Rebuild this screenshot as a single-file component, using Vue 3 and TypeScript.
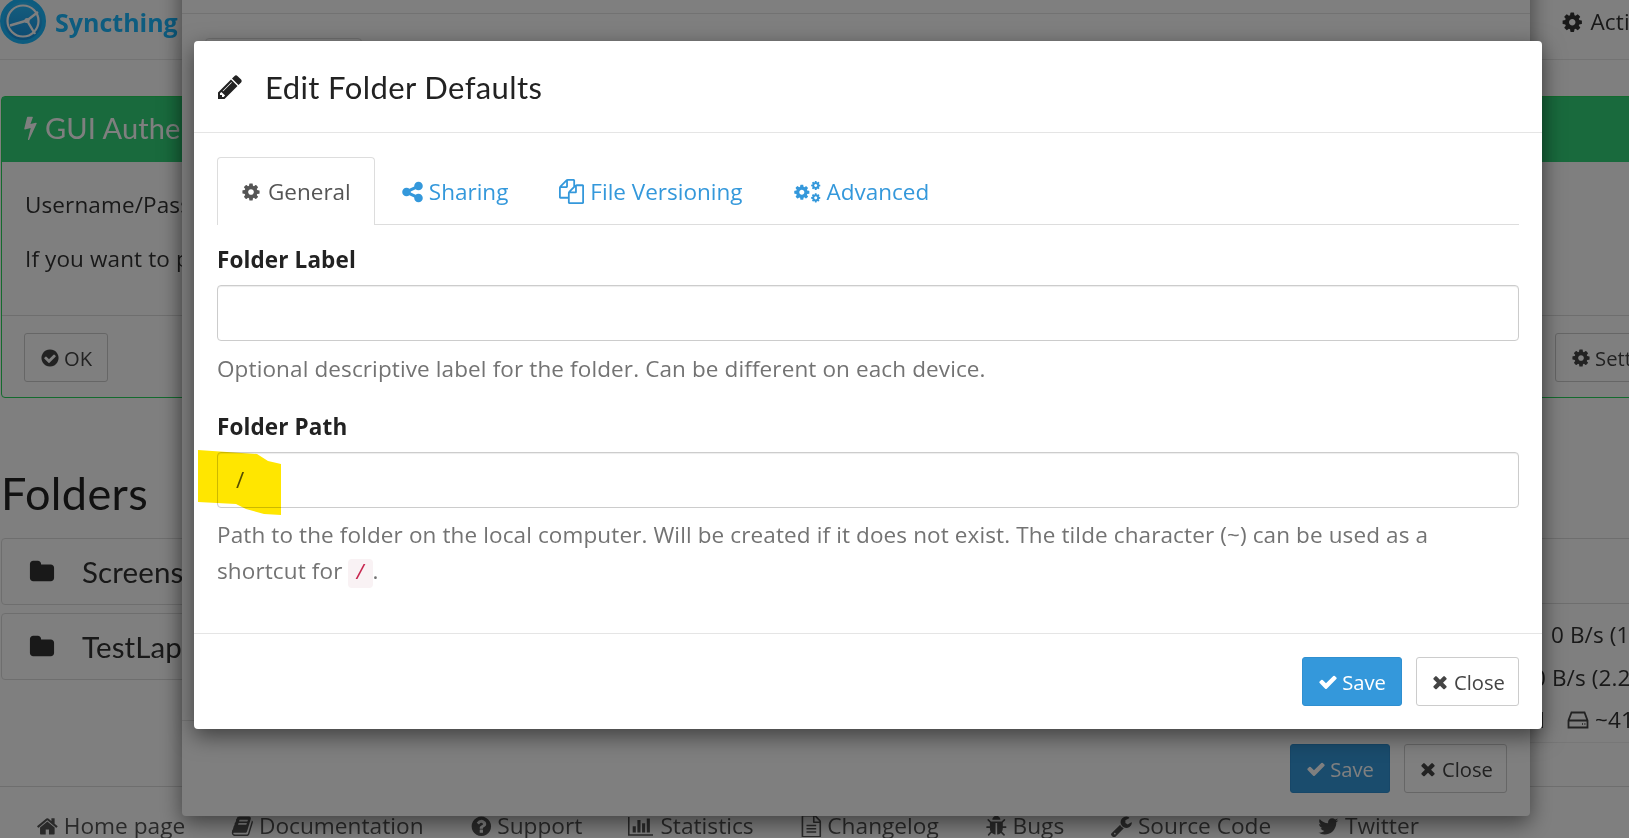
<script setup lang="ts">
const p = {
  cog: 'M1152 896q0-106-75-181t-181-75-181 75-75 181 75 181 181 75 181-75 75-181zm512-109v222q0 12-8 23t-20 13l-185 28q-19 54-39 91 35 50 107 138 10 12 10 25t-9 23q-27 37-99 108t-94 71q-12 0-26-9l-138-108q-44 23-91 38-16 136-29 186-7 28-36 28h-222q-14 0-24.5-8.5t-11.5-21.5l-28-184q-49-16-90-37l-141 107q-10 9-25 9-14 0-25-11-126-114-165-168-7-10-7-23 0-12 8-23 15-21 51-66.5t54-70.5q-27-50-41-99l-183-27q-13-2-21-12.5t-8-23.5v-222q0-12 8-23t19-13l186-28q14-46 39-92-40-57-107-138-10-12-10-24 0-10 9-23 26-36 98.5-107.5t94.5-71.5q13 0 26 10l138 107q44-23 91-38 16-136 29-186 7-28 36-28h222q14 0 24.5 8.5t11.5 21.5l28 184q49 16 90 37l142-107q9-9 24-9 13 0 25 10 129 119 165 170 7 8 7 22 0 12-8 23-15 21-51 66.5t-54 70.5q26 50 41 98l183 28q13 2 21 12.5t8 23.5z',
  check: 'M1671 566q0 40-28 68l-724 724-136 136q-28 28-68 28t-68-28l-136-136-362-362q-28-28-28-68t28-68l136-136q28-28 68-28t68 28l294 295 656-657q28-28 68-28t68 28l136 136q28 28 28 68z',
  times: 'M1490 1322q0 40-28 68l-136 136q-28 28-68 28t-68-28l-294-294-294 294q-28 28-68 28t-68-28l-136-136q-28-28-28-68t28-68l294-294-294-294q-28-28-28-68t28-68l136-136q28-28 68-28t68 28l294 294 294-294q28-28 68-28t68 28l136 136q28 28 28 68t-28 68l-294 294 294 294q28 28 28 68z',
  pencil: 'M491 1536l91-91-235-235-91 91v107h128v128h107zm523-928q0-22-22-22-10 0-17 7l-542 542q-7 7-7 17 0 22 22 22 10 0 17-7l542-542q7-7 7-17zm-54-192l416 416-832 832h-416v-416zm683 96q0 53-37 90l-166 166-416-416 166-165q36-38 90-38 53 0 91 38l235 234q37 39 37 91z',
  share: 'M1344 1024q133 0 226.5 93.5t93.5 226.5-93.5 226.5-226.5 93.5-226.5-93.5-93.5-226.5q0-12 2-34l-360-180q-92 86-218 86-133 0-226.5-93.5t-93.5-226.5 93.5-226.5 226.5-93.5q126 0 218 86l360-180q-2-22-2-34 0-133 93.5-226.5t226.5-93.5 226.5 93.5 93.5 226.5-93.5 226.5-226.5 93.5q-126 0-218-86l-360 180q2 22 2 34t-2 34l360 180q92-86 218-86z',
  copy: 'M1696 384q40 0 68 28t28 68v1216q0 40-28 68t-68 28h-960q-40 0-68-28t-28-68v-288h-544q-40 0-68-28t-28-68v-672q0-40 20-88t48-76l408-408q28-28 76-48t88-20h416q40 0 68 28t28 68v328q68-40 128-40h416zm-544 213l-299 299h299v-299zm-640-384l-299 299h299v-299zm196 647l316-316v-416h-384v416q0 40-28 68t-68 28h-416v640h512v-256q0-40 20-88t48-76zm956 804v-1152h-384v416q0 40-28 68t-68 28h-416v640h896z',
  bolt: 'M1333 566q18 20 7 44l-540 1157q-13 25-42 25-4 0-14-2-17-5-25.5-19t-4.5-30l197-808-406 101q-4 1-12 1-18 0-31-11-18-15-13-39l201-825q4-14 16-23t28-9h328q19 0 32 12.5t13 29.5q0 8-5 18l-171 463 396-98q8-2 12-2 19 0 34 15z',
  ok: 'M1412 734q0-28-18-46l-91-90q-19-19-45-19t-45 19l-408 407-226-226q-19-19-45-19t-45 19l-91 90q-18 18-18 46 0 27 18 45l362 362q19 19 45 19 27 0 46-19l543-543q18-18 18-45zm252 162q0 209-103 385.5t-279.5 279.5-385.5 103-385.5-103-279.5-279.5-103-385.5 103-385.5 279.5-279.5 385.5-103 385.5 103 279.5 279.5 103 385.5z',
  folder: 'M1728 608v704q0 92-66 158t-158 66h-1216q-92 0-158-66t-66-158v-960q0-92 66-158t158-66h320q92 0 158 66t66 158v32h672q92 0 158 66t66 158z',
  home: 'M1472 992v480q0 26-19 45t-45 19h-384v-384h-256v384h-384q-26 0-45-19t-19-45v-480q0-1 .5-3t.5-3l575-474 575 474q1 2 1 6zm223-69l-62 74q-8 9-21 11h-3q-13 0-21-7l-692-577-692 577q-12 8-24 7-13-2-21-11l-62-74q-8-10-7-23.5t11-21.5l719-599q32-26 76-26t76 26l244 204v-195q0-14 9-23t23-9h192q14 0 23 9t9 23v408l219 182q10 8 11 21.5t-7 23.5z',
  question: 'M1024 1376v-192q0-14-9-23t-23-9h-192q-14 0-23 9t-9 23v192q0 14 9 23t23 9h192q14 0 23-9t9-23zm256-672q0-88-55.5-163t-138.5-116-170-41q-243 0-371 213-15 24 8 42l132 100q7 6 19 6 16 0 25-12 53-68 86-92 34-24 86-24 48 0 85.5 26t37.5 59q0 38-20 61t-68 45q-63 28-115.5 86.5t-52.5 125.5v36q0 14 9 23t23 9h192q14 0 23-9t9-23q0-19 21.5-49.5t54.5-49.5q32-18 49-28.5t46-35 44.5-48 28-60.5 12.5-81zm384 192q0 209-103 385.5t-279.5 279.5-385.5 103-385.5-103-279.5-279.5-103-385.5 103-385.5 279.5-279.5 385.5-103 385.5 103 279.5 279.5 103 385.5z',
  chart: 'M640 896v512h-256v-512h256zm384-512v1024h-256v-1024h256zm1024 1152v128h-2048v-1536h128v1408h1920zm-640-896v768h-256v-768h256zm384-384v1152h-256v-1152h256z',
  file: 'M1596 380q28 28 48 76t20 88v1152q0 40-28 68t-68 28h-1344q-40 0-68-28t-28-68v-1600q0-40 28-68t68-28h896q40 0 88 20t76 48zm-444-244v376h376q-10-29-22-41l-313-313q-12-12-41-22zm384 1528v-1024h-416q-40 0-68-28t-28-68v-416h-768v1536h1280zm-1024-864q0-14 9-23t23-9h704q14 0 23 9t9 23v64q0 14-9 23t-23 9h-704q-14 0-23-9t-9-23v-64zm736 224q14 0 23 9t9 23v64q0 14-9 23t-23 9h-704q-14 0-23-9t-9-23v-64q0-14 9-23t23-9h704zm0 256q14 0 23 9t9 23v64q0 14-9 23t-23 9h-704q-14 0-23-9t-9-23v-64q0-14 9-23t23-9h704z',
  bug: 'M1696 960q0 26-19 45t-45 19h-224q0 171-67 290l208 209q19 19 19 45t-19 45q-18 19-45 19t-45-19l-198-197q-5 5-15 13t-42 28.5-65 36.5-82 29-97 13v-896h-128v896q-51 0-101.5-13.5t-87-33-66-39-43.5-32.5l-15-14-183 207q-20 21-48 21-24 0-43-16-19-18-20.5-44.5t15.5-46.5l202-227q-58-114-58-274h-224q-26 0-45-19t-19-45 19-45 45-19h224v-294l-173-173q-19-19-19-45t19-45 45-19 45 19l173 173h844l173-173q19-19 45-19t45 19 19 45-19 45l-173 173v294h224q26 0 45 19t19 45zm-480-576h-640q0-133 93.5-226.5t226.5-93.5 226.5 93.5 93.5 226.5z',
  wrench: 'M448 1472q0-26-19-45t-45-19-45 19-19 45 19 45 45 19 45-19 19-45zm644-420l-682 682q-37 37-90 37-52 0-91-37l-106-108q-38-36-38-90 0-53 38-91l681-681q39 98 114.5 173.5t173.5 114.5zm634-435q0 39-23 106-47 134-164.5 217.5t-258.5 83.5q-185 0-316.5-131.5t-131.5-316.5 131.5-316.5 316.5-131.5q58 0 121.5 16.5t107.5 46.5q16 11 16 28t-16 28l-293 169v224l193 107q5-3 79-48.5t135.5-81 70.5-35.5q15 0 23.5 10t8.5 25z',
  twitter: 'M1684 408q-67 98-162 167 1 14 1 42 0 130-38 259.5t-115.5 248.5-184.5 210.5-258 146-323 54.5q-271 0-496-145 35 4 76 4 225 0 401-138-105-2-188-64.5t-114-159.5q33 5 61 5 43 0 85-11-112-23-185.5-111.5t-73.5-205.5v-4q68 38 146 41-66-44-105-115t-39-154q0-88 44-163 121 149 294.5 238.5t371.5 99.5q-8-38-8-74 0-134 94.5-228.5t228.5-94.5q140 0 236 102 109-21 205-78-37 115-142 181 92-10 184-50z',
  book: 'M1703 478q40 57 18 129l-275 906q-19 64-76.5 107.5t-122.5 43.5h-923q-77 0-148.5-53.5t-99.5-131.5q-24-67-2-127 0-4 3-27t4-37q1-8-3-21.5t-3-19.5q2-11 8-21t16.5-23.5 16.5-23.5q23-38 45-91.5t30-91.5q3-10 .5-30t-.5-28q3-11 17-28t17-23q21-36 42-92t25-90q1-9-2.5-32t.5-28q4-13 22-30.5t22-22.5q19-26 42.5-84.5t27.5-96.5q1-8-3-25.5t-2-26.5q2-8 9-18t18-23 17-21q8-12 16.5-30.5t15-35 16-36 19.5-32 26.5-23.5 36-11.5 47.5 5.5l-1 3q38-9 51-9h761q74 0 114 56t18 130l-274 906q-36 119-71.5 153.5t-128.5 34.5h-869q-27 0-38 15-11 16-1 43 24 70 144 70h923q29 0 56-15.5t35-41.5l300-987q7-22 5-57 38 15 59 43zm-1064 2q-4 13 2 22.5t20 9.5h608q13 0 25.5-9.5t16.5-22.5l21-64q4-13-2-22.5t-20-9.5h-608q-13 0-25.5 9.5t-16.5 22.5zm-83 256q-4 13 2 22.5t20 9.5h608q13 0 25.5-9.5t16.5-22.5l21-64q4-13-2-22.5t-20-9.5h-608q-13 0-25.5 9.5t-16.5 22.5z',
}
const footer: { icon: string; box: number; label: string }[] = [
  { icon: p.home, box: 1792, label: 'Home page' },
  { icon: p.book, box: 1792, label: 'Documentation' },
  { icon: p.question, box: 1792, label: 'Support' },
  { icon: p.chart, box: 2048, label: 'Statistics' },
  { icon: p.file, box: 1792, label: 'Changelog' },
  { icon: p.bug, box: 1792, label: 'Bugs' },
  { icon: p.wrench, box: 1792, label: 'Source Code' },
  { icon: p.twitter, box: 1792, label: 'Twitter' },
]
const folders: string[] = ['Screenshots', 'TestLaptop']
</script>

<template>
  <div class="page">
    <header class="nav">
      <div class="brand">
        <svg class="logo" viewBox="0 0 46 46">
          <defs>
            <linearGradient id="disc" x1="0" y1="0" x2="0" y2="1">
              <stop offset="0" stop-color="#2cc0ff" />
              <stop offset="1" stop-color="#1890e0" />
            </linearGradient>
          </defs>
          <circle cx="23" cy="22" r="21" fill="url(#disc)" stroke="#1ab8ff" stroke-width="4" />
          <circle cx="23" cy="22" r="15.500" fill="none" stroke="#fff" stroke-width="2.200" />
          <path d="M27 21.500L38 13M27 21.500L10 26.500M27 21.500L35 35" fill="none" stroke="#fff" stroke-width="2.400" />
          <circle cx="27" cy="21.500" r="2.600" fill="#fff" />
        </svg>
        <span class="brand-name">Syncthing</span>
      </div>
      <div class="actions">
        <svg class="ic" viewBox="0 0 1792 1792"><path :d="p.cog" /></svg>
        <span>Actions</span>
      </div>
    </header>

    <section class="notice">
      <div class="notice-head">
        <svg class="ic bolt" viewBox="0 0 1792 1792"><path :d="p.bolt" /></svg>
        <span>GUI Authentication: Set User and Password</span>
      </div>
      <div class="notice-body">
        <p>Username/Password has not been set for the GUI authentication. Please consider setting it up.</p>
        <p>If you want to prevent other users on this computer from accessing Syncthing and through it your files, consider setting up authentication.</p>
      </div>
      <div class="notice-foot">
        <button class="btn">
          <svg class="ic" viewBox="0 0 1792 1792"><path :d="p.ok" /></svg>OK
        </button>
        <button class="btn">
          <svg class="ic" viewBox="0 0 1792 1792"><path :d="p.cog" /></svg>Settings
        </button>
      </div>
    </section>

    <div class="columns">
      <div>
        <h3 class="section-title">Folders</h3>
        <div v-for="f in folders" :key="f" class="folder">
          <svg class="folder-ic" viewBox="0 0 1792 1792"><path :d="p.folder" /></svg>
          <span>{{ f }}</span>
        </div>
      </div>
      <div class="device">
        <div class="device-head">This Device</div>
        <div class="device-row row-a">0 B/s (1.1 MiB)</div>
        <div class="device-row row-b">0 B/s (2.2 MiB)</div>
        <div class="device-row row-c">
          <span class="count">1</span>
          <svg class="hdd" viewBox="0 0 24 24"><path d="M5.5 4.5h13l3 8v7h-19v-7zM2.500 12.500h19M16 16h.8M18.500 16h.8" fill="none" stroke="#444" stroke-width="1.800" /></svg>
          <span>~41 GiB</span>
        </div>
      </div>
    </div>

    <footer class="links">
      <a v-for="l in footer" :key="l.label" class="link">
        <svg class="ic" :viewBox="`0 0 ${l.box} 1792`" :class="{ wide: l.box > 1792 }"><path :d="l.icon" /></svg>{{ l.label }}
      </a>
    </footer>

    <div class="modal back">
      <div class="m-head"></div>
      <div class="m-body">
        <div class="back-tab"></div>
      </div>
      <div class="m-foot">
        <button class="btn primary save">
          <svg class="ic" viewBox="0 0 1792 1792"><path :d="p.check" /></svg>Save
        </button>
        <button class="btn close">
          <svg class="ic" viewBox="0 0 1792 1792"><path :d="p.times" /></svg>Close
        </button>
      </div>
    </div>

    <div class="backdrop"></div>

    <div class="modal front">
      <div class="m-head">
        <svg class="pencil" viewBox="0 0 1792 1792"><path :d="p.pencil" /></svg>
        <h4 class="m-title">Edit Folder Defaults</h4>
      </div>
      <div class="m-body">
        <ul class="tabs">
          <li class="tab active">
            <svg class="tab-ic" viewBox="0 0 1792 1792"><path :d="p.cog" /></svg>General
          </li>
          <li class="tab">
            <svg class="tab-ic share" viewBox="128 0 1536 1792"><path :d="p.share" /></svg>Sharing
          </li>
          <li class="tab">
            <svg class="tab-ic copy" viewBox="0 0 1792 1792"><path :d="p.copy" /></svg>File Versioning
          </li>
          <li class="tab">
            <svg class="tab-ic cogs" viewBox="0 0 2300 1792">
              <path :d="p.cog" transform="translate(0 260) scale(.78)" />
              <path :d="p.cog" transform="translate(1380 0) scale(.47)" />
              <path :d="p.cog" transform="translate(1380 980) scale(.47)" />
            </svg>Advanced
          </li>
        </ul>
        <label class="lbl first">Folder Label</label>
        <input class="input" type="text" />
        <p class="help">Optional descriptive label for the folder. Can be different on each device.</p>
        <label class="lbl second">Folder Path</label>
        <div class="input-wrap">
          <input class="input" type="text" value="/" readonly />
          <svg class="marker" viewBox="0 0 83 65">
            <polygon points="0,0 59,4 70,11 83,14 83,65 66,64 48,59 38,54 0,52" fill="#ffe600" />
          </svg>
        </div>
        <p class="help">
          Path to the folder on the local computer. Will be created if it does not exist. The tilde character (~) can be used as a shortcut for <code class="code">/</code>.
        </p>
      </div>
      <div class="m-foot">
        <button class="btn primary save">
          <svg class="ic" viewBox="0 0 1792 1792"><path :d="p.check" /></svg>Save
        </button>
        <button class="btn close">
          <svg class="ic" viewBox="0 0 1792 1792"><path :d="p.times" /></svg>Close
        </button>
      </div>
    </div>
  </div>
</template>

<style>
html, body { margin: 0; background: #fff; overflow: hidden; }
</style>

<style scoped>
.page {
  position: relative;
  width: 1629px;
  height: 838px;
  overflow: hidden;
  font-family: "Open Sans", "Noto Sans", sans-serif;
  font-size: 22.5px;
  letter-spacing: 0.12px;
  line-height: 36px;
  color: #333;
  background: #fff;
}
.ic { width: 1em; height: 1em; fill: currentColor; flex: none; margin-right: 7px; }
.ic.wide { width: 25px; margin-right: 9px; }

.nav {
  width: 1700px;
  height: 60px;
  box-sizing: border-box;
  border-bottom: 1px solid #e7e7e7;
  display: flex;
  justify-content: space-between;
}
.brand { display: flex; align-items: flex-start; }
.logo { width: 46px; height: 46px; margin-top: -1px; }
.brand-name { font-weight: 700; font-size: 25px; line-height: 44px; color: #1ab8ff; margin-left: 9px; letter-spacing: 0; }
.actions { display: flex; align-items: center; height: 44px; width: 139px; }

.notice {
  width: 1720px;
  box-sizing: border-box;
  margin: 36px 0 0 1px;
  border: 1px solid #28d65c;
  border-radius: 4px;
}
.notice-head {
  height: 65px;
  background: #32d47a;
  color: #fff;
  display: flex;
  align-items: center;
  padding: 0 0 4px 16px;
  box-sizing: border-box;
  font-family: Lato, sans-serif;
  font-size: 29px;
}
.bolt { margin-right: 2px; width: 25px; height: 29px; }
.notice-body { padding: 25px 23px 0; height: 153px; box-sizing: border-box; }
.notice-body p { margin: 0 0 18px; white-space: nowrap; }
.notice-foot {
  border-top: 1px solid #ddd;
  padding: 17px 22px 15px;
  display: flex;
  gap: 1447px;
}

.btn {
  font-family: inherit;
  font-size: 20.200px;
  letter-spacing: 0;
  line-height: 36px;
  height: 49px;
  box-sizing: border-box;
  background: #fff;
  color: #444;
  border: 1px solid #ccc;
  border-radius: 3px;
  padding: 0 15px;
  display: inline-flex;
  align-items: center;
  white-space: nowrap;
}
.btn .ic { margin-right: 4px; width: 20px; height: 20px; }
.primary { background: #3498db; border-color: #2f8fd0; color: #fff; }
.save { width: 100px; justify-content: center; padding: 0; }
.close { width: 103px; justify-content: center; padding: 0; }

.columns {
  display: grid;
  grid-template-columns: 1000px 700px;
  margin-left: 1px;
}
.section-title {
  margin: 0;
  height: 140px;
  box-sizing: border-box;
  padding-top: 70px;
  font-family: Lato, sans-serif;
  font-weight: 400;
  font-size: 45px;
  letter-spacing: 0.4px;
  line-height: 50px;
  color: #222;
}
.folder {
  height: 67px;
  box-sizing: border-box;
  margin-bottom: 8px;
  border: 1px solid #ddd;
  border-radius: 4px;
  display: flex;
  align-items: center;
  padding-left: 27px;
  font-family: Lato, sans-serif;
  font-size: 29.500px;
}
.folder-ic { width: 26px; height: 26px; fill: #333; margin-right: 27px; }

.device { margin-top: 140px; margin-left: 14px; width: 700px; }
.device-head { height: 66px; border: 1px solid #ddd; box-sizing: border-box; padding-left: 20px; line-height: 64px; margin-bottom: 10px; }
.device-row { height: 42.500px; line-height: 42px; display: flex; white-space: nowrap; }
.row-a { padding-left: 536px; }
.row-b { padding-left: 518px; }
.row-c { padding-left: 520px; align-items: center; border-bottom: 1px solid #eee; }
.count { margin-right: 18px; }
.hdd { width: 24px; height: 24px; margin-right: 5px; }

.links {
  position: absolute;
  left: 0;
  top: 786px;
  width: 1720px;
  box-sizing: border-box;
  padding: 21px 0 0 36px;
  border-top: 1px solid #ddd;
  display: flex;
  gap: 46px;
  white-space: nowrap;
  font-size: 22.700px;
  letter-spacing: 0;
  color: #555;
}
.link { display: inline-flex; align-items: center; height: 36px; }
.links .ic { margin-right: 5px; }
.links .ic.wide { width: 25px; margin-right: 7px; }

.modal {
  position: absolute;
  width: 1348px;
  display: flex;
  flex-direction: column;
  background: #fff;
  border-radius: 4px;
  box-shadow: 0 7px 22px rgba(0, 0, 0, 0.5);
  box-sizing: border-box;
}
.back { left: 182px; top: -78px; height: 894px; }
.front { left: 194px; top: 41px; height: 688px; }
.backdrop { position: absolute; inset: 0; background: rgba(0, 0, 0, 0.5); }

.m-head {
  height: 92px;
  flex: none;
  box-sizing: border-box;
  border-bottom: 1px solid #e5e5e5;
  display: flex;
  align-items: center;
  padding-left: 23px;
}
.pencil { width: 28px; height: 28px; fill: #222; margin: 0 21px 0 -1px; }
.m-title {
  margin: 0;
  font-family: Lato, sans-serif;
  font-weight: 400;
  font-size: 31px;
  letter-spacing: 0.4px;
  line-height: 36px;
  color: #222;
}
.m-body { flex: 1; padding: 24px 23px 0; }
.back-tab { width: 155px; height: 40px; border: 1px solid #ddd; border-radius: 4px 4px 0 0; }
.m-foot {
  height: 96px;
  flex: none;
  box-sizing: border-box;
  border-top: 1px solid #e5e5e5;
  display: flex;
  justify-content: flex-end;
  gap: 14px;
  padding: 23px 23px 0;
}

.tabs {
  list-style: none;
  margin: 0;
  padding: 0;
  height: 68px;
  box-sizing: border-box;
  display: flex;
  border-bottom: 1px solid #ddd;
}
.tab {
  height: 68px;
  box-sizing: border-box;
  margin-right: 3px;
  padding: 0 23px;
  display: flex;
  align-items: center;
  letter-spacing: 0;
  color: #3498db;
  border: 1px solid transparent;
  border-bottom: none;
}
.tab.active {
  color: #555;
  background: #fff;
  border-color: #ddd;
  border-radius: 4px 4px 0 0;
}
.tab-ic { width: 20px; height: 20px; fill: currentColor; flex: none; margin-right: 7px; }
.tab-ic.share { width: 21px; height: 24px; margin-right: 6px; }
.tab-ic.copy { width: 25px; height: 25px; margin-right: 6px; }
.tab-ic.cogs { width: 29px; height: 23px; margin-right: 4px; }

.lbl { display: block; font-weight: 700; color: #222; line-height: 36px; }
.first { margin-top: 17px; }
.second { margin-top: 22px; }
.input {
  display: block;
  width: 100%;
  height: 56px;
  box-sizing: border-box;
  margin-top: 7px;
  border: 1px solid #ccc;
  border-radius: 4px;
  box-shadow: inset 0 1px 1px rgba(0, 0, 0, 0.075);
  padding: 0 18px;
  font: inherit;
  color: #555;
  background: #fff;
  outline: none;
}
.input-wrap { position: relative; }
.marker {
  position: absolute;
  left: -19px;
  top: -2px;
  width: 83px;
  height: 65px;
  mix-blend-mode: multiply;
}
.help { margin: 9.500px 0 0; color: #737373; }
.code {
  font-family: "Liberation Mono", monospace;
  font-size: 20px;
  background: #f9f2f4;
  color: #c7254e;
  border-radius: 4px;
  padding: 3px 6px;
}
</style>
